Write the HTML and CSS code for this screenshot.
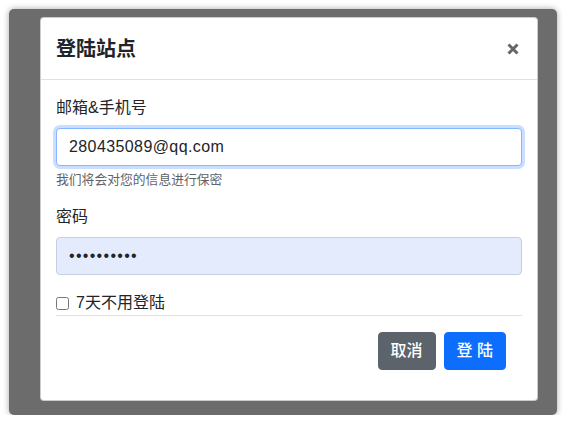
FILE: index.html
```html
<!DOCTYPE html>
<html lang="zh-CN">
<head>
<meta charset="utf-8">
<title>登陆站点</title>
<link rel="stylesheet" href="styles.css">
</head>
<body>
<div class="backdrop">
  <div class="modal">
    <div class="modal-header">
      <h5 class="modal-title">登陆站点</h5>
      <button class="btn-close" type="button" aria-label="Close">
        <svg width="12" height="12" viewBox="0 0 12 12"><path d="M1.5 1.5 L10.5 10.5 M10.5 1.5 L1.5 10.5" stroke="#666" stroke-width="3" stroke-linecap="butt"/></svg>
      </button>
    </div>
    <div class="modal-body">
      <div class="group">
        <label class="form-label">邮箱&amp;手机号</label>
        <input class="form-control focus" type="text" value="280435089@qq.com">
        <div class="form-text">我们将会对您的信息进行保密</div>
      </div>
      <div class="group">
        <label class="form-label">密码</label>
        <input class="form-control autofill" type="password" value="1234567890">
      </div>
      <div class="check-row">
        <input class="check" type="checkbox">
        <span>7天不用登陆</span>
      </div>
      <div class="modal-footer">
        <button class="btn btn-secondary" type="button">取消</button>
        <button class="btn btn-primary" type="button">登 陆</button>
      </div>
    </div>
  </div>
</div>
</body>
</html>
```

FILE: styles.css
```css
* { box-sizing: border-box; }
html, body {
  margin: 0;
  padding: 0;
  background: #ffffff;
  font-family: "Liberation Sans", "Noto Sans CJK SC", sans-serif;
  color: #212529;
}
.backdrop {
  margin: 9px 9px 0 9px;
  height: 406px;
  background: #6c6c6c;
  border-radius: 5px;
  box-shadow: 0 0 6px rgba(0, 0, 0, 0.35);
  padding: 8px 18px 0 31px;
}
.modal {
  width: 498px;
  height: 384px;
  background: #ffffff;
  border: 1px solid rgba(0, 0, 0, 0.2);
  border-radius: 4px;
  display: flex;
  flex-direction: column;
}
.modal-header {
  display: flex;
  align-items: center;
  justify-content: space-between;
  padding: 16px 18px 15px 15px;
  border-bottom: 1px solid #dee2e6;
}
.modal-title {
  margin: 0;
  font-size: 20px;
  line-height: 30px;
  font-weight: 700;
}
.btn-close {
  border: 0;
  background: transparent;
  padding: 0;
  width: 12px;
  height: 12px;
  display: flex;
}
.modal-body {
  padding: 16px 15px 0 15px;
}
.group {
  margin-bottom: 16px;
}
.form-label {
  display: block;
  font-size: 16px;
  line-height: 24px;
  margin-bottom: 8px;
}
.form-control {
  display: block;
  width: 100%;
  height: 38px;
  padding: 6px 12px;
  font-family: "Liberation Sans", "Noto Sans CJK SC", sans-serif;
  font-size: 16px;
  color: #212529;
  border: 1px solid #ced4da;
  border-radius: 4px;
  outline: none;
}
.form-control.focus {
  border-color: #86b7fe;
  box-shadow: 0 0 0 3px rgba(13, 110, 253, 0.22);
  letter-spacing: 0.4px;
}
.form-control.autofill {
  background: #e3ebfd;
  border-color: #c5cfdf;
  letter-spacing: 1.3px;
}
.form-text {
  margin-top: 4px;
  font-size: 12.8px;
  line-height: 19px;
  color: #5f6368;
}
.check-row {
  display: flex;
  align-items: center;
  height: 24px;
  font-size: 16px;
  line-height: 24px;
}
.check {
  width: 13px;
  height: 13px;
  margin: 0 7px 0 0;
}
.modal-footer {
  display: flex;
  justify-content: flex-end;
  gap: 8px;
  border-top: 1px solid #dee2e6;
  padding: 16px 16px 0 0;
}
.btn {
  height: 38px;
  padding: 6px 12px;
  font-family: "Liberation Sans", "Noto Sans CJK SC", sans-serif;
  font-size: 16px;
  line-height: 24px;
  font-weight: 500;
  color: #ffffff;
  border: 1px solid transparent;
  border-radius: 4px;
}
.btn-secondary {
  background: #5c636a;
  border-color: #5c636a;
}
.btn-primary {
  background: #0d6efd;
  border-color: #0d6efd;
}
```
